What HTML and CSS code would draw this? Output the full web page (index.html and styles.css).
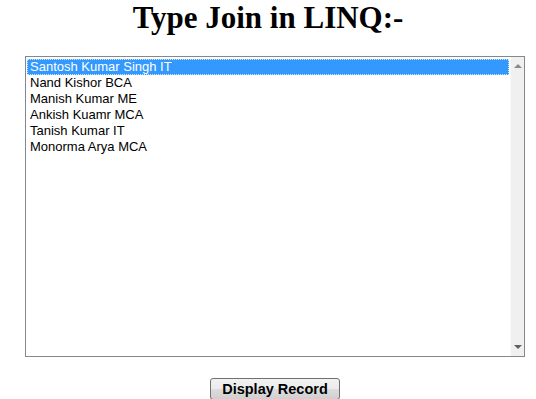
FILE: index.html
```html
<!DOCTYPE html>
<html lang="en">

<head>
    <meta charset="UTF-8">
    <meta name="viewport" content="width=device-width, initial-scale=1.0">
    <title>Type Join in LINQ</title>
    <link rel="stylesheet" href="styles.css">
</head>

<body>
    <h1 class="title">Type Join in LINQ:-</h1>

    <section class="container">
        <div class="listbox">
            <div class="items">
                <div class="item selected">Santosh Kumar Singh IT</div>
                <div class="item">Nand Kishor BCA</div>
                <div class="item">Manish Kumar ME</div>
                <div class="item">Ankish Kuamr MCA</div>
                <div class="item">Tanish Kumar IT</div>
                <div class="item">Monorma Arya MCA</div>
            </div>
            <div class="scrollbar">
                <span class="arrow up"></span>
                <span class="arrow down"></span>
            </div>
        </div>

        <div class="buttons">
            <button class="btn">Display Record</button>
        </div>
    </section>
</body>

</html>
```

FILE: styles.css
```css
html {
    overflow: hidden;
}

body {
    margin: 0;
    background: #fff;
    color: #000;
}

.title {
    margin: 0 0 20px;
    font-family: "Liberation Serif", "Times New Roman", serif;
    font-size: 31px;
    font-weight: bold;
    text-align: center;
}

.container {
    width: 500px;
    margin-left: 25px;
}

.listbox {
    display: flex;
    box-sizing: border-box;
    height: 301px;
    border: 1px solid #828790;
    background: #fff;
}

.items {
    flex: 1;
    padding: 2px 1px;
}

.item {
    height: 16px;
    padding-left: 3px;
    font-family: "Liberation Sans", Arial, sans-serif;
    font-size: 13px;
    line-height: 16px;
    white-space: nowrap;
}

.item.selected {
    background: #3399ff;
    color: #fff;
    outline: 1px dotted #cfe6ff;
    outline-offset: -1px;
}

.scrollbar {
    display: flex;
    flex-direction: column;
    justify-content: space-between;
    align-items: center;
    width: 14px;
    padding: 7px 0;
    box-sizing: border-box;
    background: #f0f0f0;
    border-left: 1px solid #fafafa;
}

.arrow {
    width: 0;
    height: 0;
    border-left: 4px solid transparent;
    border-right: 4px solid transparent;
}

.arrow.up {
    border-bottom: 4px solid #8a8a8a;
}

.arrow.down {
    border-top: 4px solid #606060;
}

.buttons {
    margin-top: 21px;
    text-align: center;
}

.btn {
    width: 130px;
    height: 22px;
    padding: 0;
    border: 1px solid #707070;
    border-radius: 3px;
    background: linear-gradient(#f2f2f2 0%, #ebebeb 50%, #dddddd 50%, #cfcfcf 100%);
    font-family: "Liberation Sans", Arial, sans-serif;
    font-size: 14.5px;
    font-weight: bold;
    color: #000;
    line-height: 20px;
    vertical-align: top;
}
```
